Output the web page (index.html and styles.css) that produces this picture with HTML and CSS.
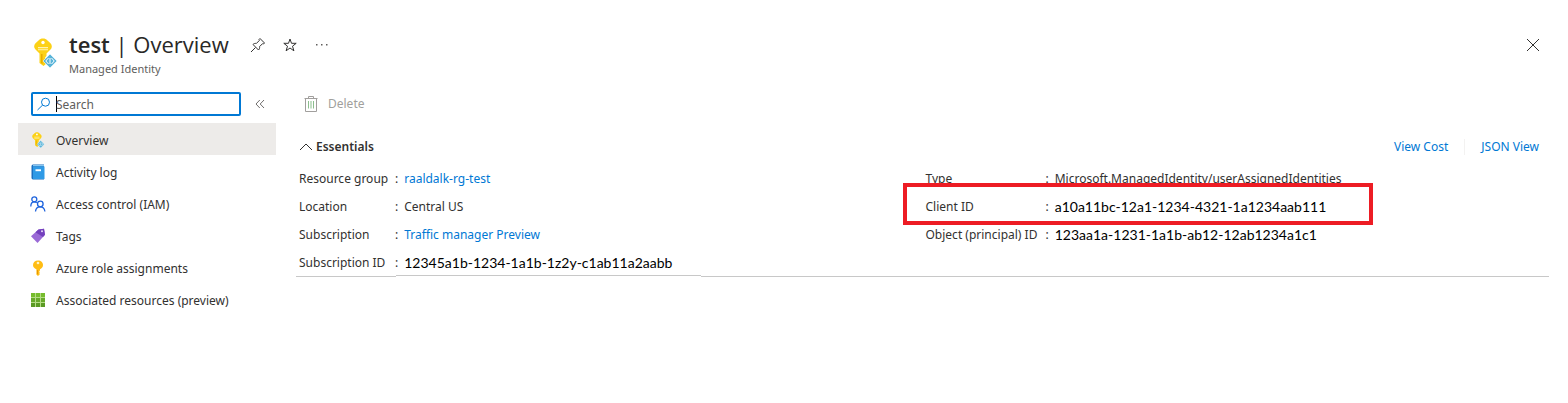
FILE: index.html
```html
<!DOCTYPE html>
<html lang="en">
<head>
<meta charset="utf-8">
<title>test | Overview</title>
<link rel="stylesheet" href="styles.css">
</head>
<body>
<svg class="defs" aria-hidden="true">
  <defs>
    <symbol id="identity" viewBox="0 0 24 30">
      <path fill="#fcd116" d="M10 .5c2 0 3 .6 4.500 2l3 2.700c1.800 1.800 1.800 4.600 0 6.400L13.500 15.500v2.500l-1.500 1.500 1.500 1.500-1.500 1.500 1.500 1.500v1.500L10.500 28 6.500 25V15.500l-4-4C.7 9.700.7 7 2.500 5.200L5.500 2.500C7 1.100 8 .5 10 .5z"/>
      <path fill="#e8ac00" d="M8 16h1.500v10L8 25z"/>
      <circle cx="10" cy="4.500" r="1.700" fill="#fff"/>
      <path fill="#fff3b0" d="M5 9h10v1.300H5zM5 11.300h10v1H5z"/>
      <path fill="#59b4d9" stroke="#fff" stroke-width=".6" d="M17 16l7 7-7 7-7-7z"/>
      <path fill="none" stroke="#fff" d="M17 20v6M15.500 20L12.800 23l2.700 3M18.500 20l2.700 3-2.700 3"/>
    </symbol>
  </defs>
</svg>
<div class="blade">
  <header class="header">
    <svg class="header-icon"><use href="#identity"/></svg>
    <div class="titles">
      <div class="title-row">
        <h1 class="title"><strong>test</strong> | Overview</h1>
        <button class="icon-button" aria-label="Pin"><svg width="16" height="16" viewBox="0 0 16 16" fill="none" stroke="#323130"><path d="M10 1.500l4.500 4.500-1 1-1-.3-3 3c.3 1.200 0 2.300-1 3.300L3 7.500c1-1 2.100-1.300 3.300-1l3-3L9 2.500zM5.500 10.500L1 15"/></svg></button>
        <button class="icon-button" aria-label="Favorite"><svg width="16" height="16" viewBox="0 0 16 16" fill="none" stroke="#323130"><path d="M8 2l1.500 4.300h4.700l-3.700 2.900 1.400 4.600L8 11l-3.900 2.800 1.400-4.600-3.700-2.900h4.700z"/></svg></button>
        <button class="icon-button" aria-label="More"><svg width="16" height="16" viewBox="0 0 16 16" fill="#605e5c"><path d="M2 7h1.500v1.500H2zM7 7h1.500v1.500H7zM12 7h1.500v1.500H12z"/></svg></button>
      </div>
      <p class="subtitle">Managed Identity</p>
    </div>
    <button class="icon-button close" aria-label="Close"><svg width="14" height="14" viewBox="0 0 14 14" fill="none" stroke="#323130"><path d="M1 1l12 12M13 1L1 13"/></svg></button>
  </header>
  <div class="body">
    <aside class="sidebar">
      <div class="search-row">
        <div class="search">
          <svg width="14" height="14" viewBox="0 0 14 14" fill="none" stroke="#0078d4"><circle cx="8.500" cy="5.200" r="4"/><path d="M5.600 8.100L.5 13"/></svg>
          <span class="caret"></span>
          <input class="search-input" type="text" placeholder="Search" aria-label="Search">
        </div>
        <button class="collapse" aria-label="Collapse menu"><svg width="10" height="10" viewBox="0 0 10 10" fill="none" stroke="#605e5c" stroke-width=".9"><path d="M4.800 1L1 5l3.800 4M9 1L5.200 5 9 9"/></svg></button>
      </div>
      <nav class="menu">
        <a class="item selected" href="#"><svg width="16" height="16" viewBox="0 0 24 30"><use href="#identity"/></svg>Overview</a>
        <a class="item" href="#"><svg width="16" height="16" viewBox="0 0 16 16"><path fill="#1b6fc0" d="M3 .5h11v15H3a1.800 1.800 0 0 1-1.500-1.700V2A1.600 1.600 0 0 1 3 .5z"/><path fill="#2f9ae6" d="M3 2.500h11.500V15H3z"/><path fill="#85c8f2" d="M3 1h11v1.200H3z"/><path fill="#fff" d="M5.500 5.300h5.500v1.900H5.500z"/></svg>Activity log</a>
        <a class="item" href="#"><svg width="16" height="16" viewBox="0 0 16 16" fill="none" stroke="#1f64dd" stroke-width="1.300"><circle cx="4.300" cy="3.300" r="2.500"/><path d="M.8 10.500c0-3 1.500-4.700 3.500-4.700 1 0 1.800.3 2.500 1M5.500 15.500c.3-3 2-4.600 4.500-4.600s4.600 1.600 4.900 4.600"/><circle cx="10.300" cy="8" r="2.800"/></svg>Access control (IAM)</a>
        <a class="item" href="#"><svg width="16" height="16" viewBox="0 0 16 16"><path fill="#9a6ad6" d="M8.500 1.500L14 .7l1 6L7.500 15 1 8.300z"/><path fill="#7440bd" d="M8.500 1.500L14 .7l1 6-2 2.200L5.500 4.200z"/><circle cx="12" cy="3.200" r="1" fill="#e6d9f7"/></svg>Tags</a>
        <a class="item" href="#"><svg width="16" height="16" viewBox="0 0 16 16"><path fill="#ffbd14" d="M8 .5c3 0 5 2 5 4.500 0 2-1.200 3.500-3 4.200v1.300l-1 .8 1 .9-1 .9 1 .8-2 2-1.600-1.500V9.300C4.300 8.500 3 7 3 5 3 2.500 5 .5 8 .5z"/><circle cx="8" cy="3" r="1.300" fill="#fff3c4"/><path fill="#e69200" d="M7 10h.9v4.500L7 14z"/></svg>Azure role assignments</a>
        <a class="item" href="#"><svg width="16" height="16" viewBox="0 0 16 16"><path fill="#b4dc86" d="M1 1h14v14H1z"/><path fill="#76bc2d" d="M1 1h4v4H1zM6 1h4v4H6zM11 1h4v4h-4z"/><path fill="#68a92a" d="M1 6h4v4H1zM6 6h4v4H6zM11 6h4v4h-4z"/><path fill="#5b9a24" d="M1 11h4v4H1zM6 11h4v4H6zM11 11h4v4h-4z"/></svg>Associated resources (preview)</a>
      </nav>
    </aside>
    <main class="content">
      <div class="toolbar">
        <button class="delete" disabled><svg width="14" height="18" viewBox="0 0 14 18" fill="none" stroke="#a19f9d"><path d="M.5 3.500h13M4.500 3.500v-2h5v2M1.500 3.500v13h11v-13"/><path stroke="#8cbf8e" d="M4.500 6v7.500M7 6v7.500M9.500 6v7.500"/></svg>Delete</button>
      </div>
      <div class="essentials-head">
        <button class="essentials-toggle" aria-expanded="true"><svg width="14" height="8" viewBox="0 0 14 8" fill="none" stroke="#323130"><path d="M1 7l6-6 6 6"/></svg>Essentials</button>
        <div class="views"><a href="#">View Cost</a><span class="divider"></span><a href="#">JSON View</a></div>
      </div>
      <div class="essentials">
        <dl class="facts">
          <div class="fact"><dt>Resource group</dt><dd><a href="#">raaldalk-rg-test</a></dd></div>
          <div class="fact"><dt>Location</dt><dd>Central US</dd></div>
          <div class="fact"><dt>Subscription</dt><dd><a href="#">Traffic manager Preview</a></dd></div>
          <div class="fact patched"><dt>Subscription ID</dt><dd class="guid">12345a1b-1234-1a1b-1z2y-c1ab11a2aabb</dd></div>
        </dl>
        <dl class="facts wide">
          <div class="fact"><dt>Type</dt><dd>Microsoft.ManagedIdentity/userAssignedIdentities</dd></div>
          <div class="fact highlighted"><dt>Client ID</dt><dd class="guid">a10a11bc-12a1-1234-4321-1a1234aab111</dd></div>
          <div class="fact"><dt>Object (principal) ID</dt><dd class="guid">123aa1a-1231-1a1b-ab12-12ab1234a1c1</dd></div>
        </dl>
      </div>
    </main>
  </div>
</div>
</body>
</html>
```
FILE: styles.css
```css
*, ::before, ::after { box-sizing: border-box; }
body { margin: 0; background: #fff; color: #323130; font: 12px/20px "Noto Sans", "Open Sans", sans-serif; }
a { color: #0078d4; text-decoration: none; }
button { font: inherit; color: inherit; background: none; border: 0; padding: 0; display: flex; align-items: center; }
svg { flex: none; display: block; }
.defs { position: absolute; width: 0; height: 0; }
.blade { padding: 28px 19px 0 18px; }
.header { display: flex; align-items: flex-start; padding: 0 9px 0 15px; height: 64px; }
.header-icon { width: 24px; height: 30px; margin: 10px 12px 0 0; }
.titles { flex: 1; }
.title-row { display: flex; align-items: center; gap: 16px; height: 34px; }
.title { margin: 0 5px 0 0; font: 400 22px/32px "Open Sans", "Noto Sans", sans-serif; height: 34px; color: #292827; }
.title strong { font-weight: 600; }
.subtitle { margin: 0; font-size: 11px; line-height: 14px; color: #605e5c; }
.close { margin-top: 10px; }
.body { display: flex; gap: 20px; }
.sidebar { width: 258px; flex: none; }
.search-row { display: flex; align-items: center; gap: 14px; padding-left: 13px; height: 24px; }
.search { display: flex; align-items: center; width: 210px; height: 24px; border: 2px solid #0078d4; border-radius: 2px; padding-left: 4px; }
.caret { width: 1px; height: 16px; margin-left: 5px; background: #000; }
.search-input { flex: 1; min-width: 0; border: 0; outline: 0; padding: 1px 0 0; margin-left: -1px; background: none; font: inherit; color: #323130; }
.search-input::placeholder { color: #605e5c; opacity: 1; }
.menu { margin-top: 7px; }
.item { display: flex; align-items: center; gap: 10px; height: 32px; padding: 4px 12px 0; color: #323130; }
.item svg { margin-top: -3px; }
.selected { background: #edebe9; }
.content { flex: 1; min-width: 0; }
.toolbar { height: 24px; padding-left: 8px; display: flex; }
.delete { gap: 10px; color: #a19f9d; }
.essentials-head { display: flex; align-items: center; justify-content: space-between; padding: 0 10px 0 3px; margin-top: 20px; height: 22px; }
.essentials-toggle { gap: 3px; font-weight: 600; }
.views { display: flex; align-items: center; gap: 16px; }
.divider { width: 1px; height: 16px; background: #f3f2f1; }
.essentials { display: grid; grid-template-columns: 1fr 1fr; padding: 6px 0 0; border-bottom: 1px solid #c8c8c8; }
.facts { margin: 0; padding-left: 3px; }
.fact { display: grid; grid-template-columns: 96px 1fr; height: 28px; align-items: center; position: relative; }
.facts dt { white-space: nowrap; }
.wide .fact { grid-template-columns: 120px 1fr; }
.fact dt, .fact dd { padding-top: 1px; }
.fact dd { margin: 0; display: flex; gap: 6px; white-space: nowrap; }
.fact dd::before { content: ":"; font-family: "Noto Sans", sans-serif; font-size: 12px; color: #323130; }
.fact .guid { font-family: Lato, "Open Sans", sans-serif; font-size: 14px; color: #000; }
.patched::after { content: ""; position: absolute; left: 97px; bottom: -1px; width: 305px; height: 2px; background: #fff; border-top: 1px solid #c8c8c8; }
.highlighted::after { content: ""; position: absolute; left: -23px; top: -9px; width: 470px; height: 42px; border: 4px solid #ed1c24; }
```
